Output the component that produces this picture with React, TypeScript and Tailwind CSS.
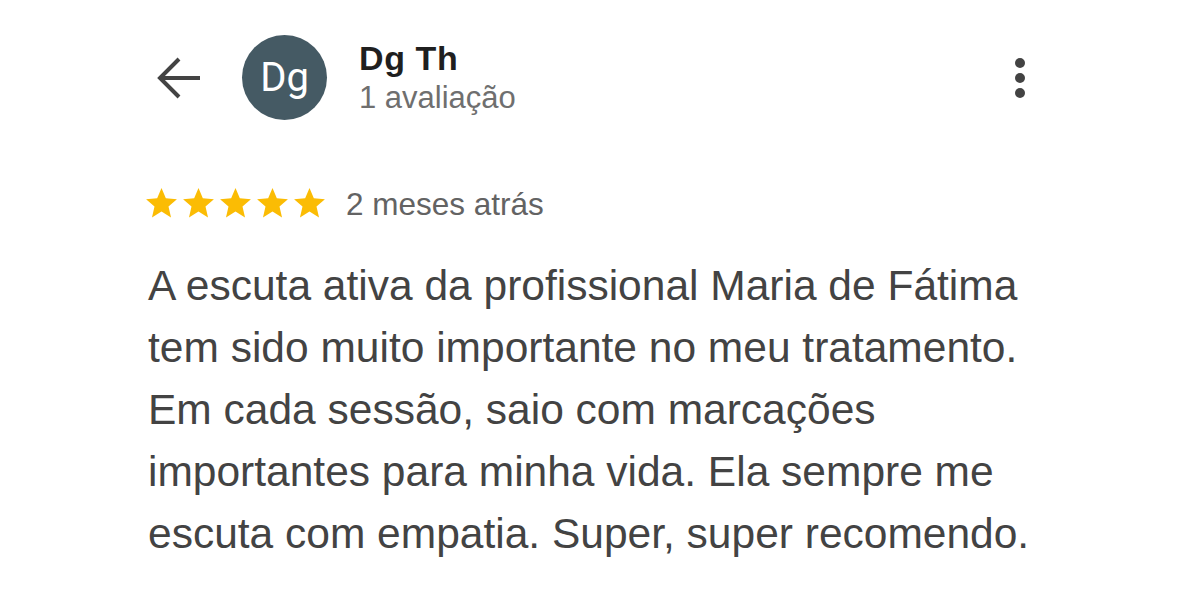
import {ReactNode} from 'react'

const font = {fontFamily: '"Liberation Sans", Arial, sans-serif'}

const Star = () => (
  <svg width="37" height="37" viewBox="0 0 24 24" className="shrink-0">
    <path
      fill="#fbbc04"
      d="M12 17.27L18.18 21l-1.64-7.03L22 9.24l-7.19-.61L12 2 9.19 8.63 2 9.24l5.46 4.73L5.82 21z"
    />
  </svg>
)

const BackArrow = () => (
  <svg width="56" height="44" viewBox="0 0 56 44" className="shrink-0">
    <path
      d="M12 22H52M31 3L12 22L31 41"
      fill="none"
      stroke="#434343"
      strokeWidth="4"
      strokeLinejoin="miter"
    />
  </svg>
)

const Line = ({children}: {children: ReactNode}) => (
  <span className="block whitespace-nowrap">{children}</span>
)

const App = () => {
  return (
    <div className="w-[1200px] h-[600px] bg-white overflow-hidden" style={font}>
      <div className="pl-[148px] pr-[175px]">
        <div className="flex items-center mt-[35px] h-[85px]">
          <BackArrow />
          <div
            className="ml-[38px] w-[85px] h-[85px] rounded-full bg-[#455a64] flex items-center justify-center text-white text-[40px] shrink-0"
            style={{fontFamily: 'Roboto, "Liberation Sans", sans-serif'}}
          >
            Dg
          </div>
          <div className="ml-[32px] flex flex-col">
            <span className="text-[34px] leading-[38px] font-bold tracking-[0.6px] text-[#1f1f1f]">Dg Th</span>
            <span className="mt-[3px] text-[31px] leading-[36px] text-[#6f6f6f]">1 avaliação</span>
          </div>
          <div className="ml-auto flex flex-col gap-[5px]">
            <span className="w-[10px] h-[10px] rounded-full bg-[#434343]" />
            <span className="w-[10px] h-[10px] rounded-full bg-[#434343]" />
            <span className="w-[10px] h-[10px] rounded-full bg-[#434343]" />
          </div>
        </div>

        <div className="flex items-center mt-[65px] -ml-[5px]">
          <Star />
          <Star />
          <Star />
          <Star />
          <Star />
          <span className="ml-[18px] text-[31.5px] leading-[36px] text-[#636363]">2 meses atrás</span>
        </div>

        <p className="mt-[33px] text-[42.5px] leading-[62px] text-[#434343]">
          <Line>A escuta ativa da profissional Maria de Fátima</Line>
          <Line>tem sido muito importante no meu tratamento.</Line>
          <Line>Em cada sessão, saio com marcações</Line>
          <Line>importantes para minha vida. Ela sempre me</Line>
          <Line>escuta com empatia. Super, super recomendo.</Line>
        </p>
      </div>
    </div>
  )
}

export default App
